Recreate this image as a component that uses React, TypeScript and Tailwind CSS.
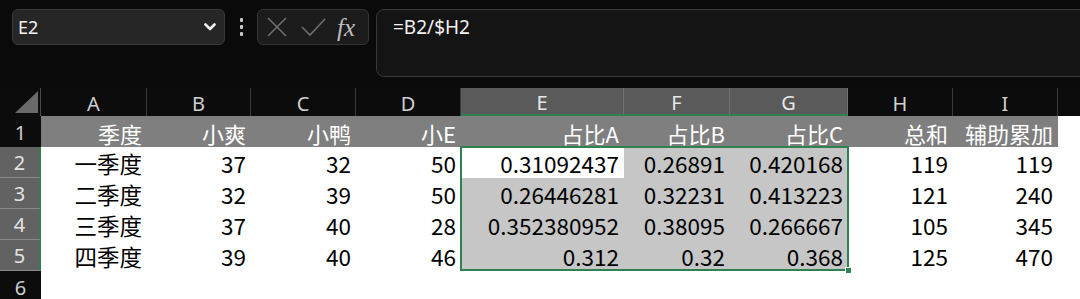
import React from "react";

const FONT = { fontFamily: '"Noto Sans CJK SC", "Noto Sans", sans-serif' };
const UI = { fontFamily: '"Noto Sans", sans-serif' };

const colLetters = ["A", "B", "C", "D", "E", "F", "G", "H", "I"];
const colW = [
  "w-[106px]",
  "w-[104px]",
  "w-[105px]",
  "w-[105px]",
  "w-[163px]",
  "w-[106px]",
  "w-[118px]",
  "w-[105px]",
  "w-[105px]",
];

const header = ["季度", "小爽", "小鸭", "小E", "占比A", "占比B", "占比C", "总和", "辅助累加"];

const rows = [
  ["一季度", "37", "32", "50", "0.31092437", "0.26891", "0.420168", "119", "119"],
  ["二季度", "32", "39", "50", "0.26446281", "0.32231", "0.413223", "121", "240"],
  ["三季度", "37", "40", "28", "0.352380952", "0.38095", "0.266667", "105", "345"],
  ["四季度", "39", "40", "46", "0.312", "0.32", "0.368", "125", "470"],
];

function Toolbar() {
  return (
    <div className="flex items-start h-[88px] pt-[9px] pl-[12px]">
      {/* Name box */}
      <div className="w-[213px] h-[36px] shrink-0 rounded-[6px] border border-[#3a3a3a] bg-[#262626] flex items-center justify-between pl-[5px] pr-[8px]">
        <span className="text-[18px] text-[#f2f2f2]" style={UI}>
          E2
        </span>
        <svg width="12" height="8" viewBox="0 0 12 8">
          <path d="M1.5 1.5 L6 6 L10.5 1.5" fill="none" stroke="#f0f0f0" strokeWidth="2.6" strokeLinecap="round" strokeLinejoin="round" />
        </svg>
      </div>

      {/* dots */}
      <div className="w-[32px] h-[36px] shrink-0 flex flex-col items-center justify-center gap-[3px]">
        <span className="w-[3px] h-[4px] rounded-[1px] bg-[#c8c8c8]" />
        <span className="w-[3px] h-[4px] rounded-[1px] bg-[#c8c8c8]" />
        <span className="w-[3px] h-[4px] rounded-[1px] bg-[#c8c8c8]" />
      </div>

      {/* cancel / enter / fx */}
      <div className="w-[112px] h-[36px] shrink-0 rounded-[6px] border border-[#353535] bg-[#1c1c1c] flex items-center pl-[9px]">
        <svg width="20" height="20" viewBox="0 0 20 20" className="shrink-0">
          <path d="M1 1 L19 19 M19 1 L1 19" stroke="#6e6e6e" strokeWidth="1.6" />
        </svg>
        <svg width="25" height="20" viewBox="0 0 25 20" className="ml-[14px] shrink-0">
          <path d="M1 10 L9 18 L24 2" fill="none" stroke="#6e6e6e" strokeWidth="1.6" />
        </svg>
        <span
          className="ml-[11px] text-[25px] italic leading-none text-[#bdbdbd]"
          style={{ fontFamily: '"Liberation Serif", serif' }}
        >
          fx
        </span>
      </div>

      {/* formula bar */}
      <div className="ml-[7px] flex-1 -mr-[20px] h-[68px] rounded-[8px] border border-[#3a3a3a] bg-[#141414] pl-[16px]">
        <div className="h-[34px] flex items-center text-[19px] text-[#f2f2f2]" style={UI}>
          =B2/$H2
        </div>
      </div>
    </div>
  );
}

function Sheet() {
  return (
    <div className="relative" style={FONT}>
      {/* column headers */}
      <div className="flex h-[28px] bg-[#0c0c0c]">
        <div className="w-[41px] shrink-0 border-r border-[#4a4a4a] flex items-end justify-end pr-[2px] pb-[3px]">
          <svg width="23" height="22" viewBox="0 0 23 22">
            <path d="M0 22 L23 22 L23 0 Z" fill="#6a6a6a" />
          </svg>
        </div>
        {colLetters.map((c, i) => {
          const sel = i >= 4 && i <= 6;
          return (
            <div
              key={c}
              className={`${colW[i]} shrink-0 flex items-center justify-center pt-[4px] text-[20px] border-r ${
                sel
                  ? "bg-[#5a5a5a] text-[#e8e8e8] border-[#707070] border-b-2 border-b-[#2f8152]"
                  : "text-[#d0d0d0] border-[#3a3a3a]"
              }`}
              style={UI}
            >
              {c}
            </div>
          );
        })}
        <div className="flex-1" />
      </div>

      {/* row 1 */}
      <div className="flex h-[31px] bg-white">
        <div
          className="w-[41px] shrink-0 bg-[#0c0c0c] flex items-center justify-center pt-[3px] text-[20px] text-[#cfcfcf]"
          style={UI}
        >
          1
        </div>
        {header.map((h, i) => (
          <div
            key={h}
            className={`${colW[i]} shrink-0 bg-[#7f7f7f] text-white text-[22px] flex items-center justify-end pr-[5px] pt-[3px]`}
          >
            {h}
          </div>
        ))}
        <div className="flex-1" />
      </div>

      {/* data rows */}
      {rows.map((r, ri) => (
        <div key={ri} className="flex h-[31px] bg-white">
          <div
            className="w-[41px] shrink-0 bg-[#626262] border-b border-[#8a8a8a] border-r-2 border-r-[#2f8152] flex items-center justify-center pt-[2px] text-[20px] text-[#e4e4e4]"
            style={UI}
          >
            {ri + 2}
          </div>
          {r.map((v, ci) => {
            const inSel = ci >= 4 && ci <= 6;
            const active = ri === 0 && ci === 4;
            return (
              <div
                key={ci}
                className={`${colW[ci]} shrink-0 text-black text-[22.5px] flex items-center justify-end pr-[5px] pt-[2px] ${
                  inSel && !active ? "bg-[#c6c6c6]" : "bg-white"
                }`}
              >
                {v}
              </div>
            );
          })}
          <div className="flex-1" />
        </div>
      ))}

      {/* row 6 */}
      <div className="flex h-[31px] bg-white">
        <div
          className="w-[41px] shrink-0 bg-[#0c0c0c] flex items-center justify-center pt-[2px] text-[20px] text-[#cfcfcf]"
          style={UI}
        >
          6
        </div>
        <div className="flex-1" />
      </div>

      {/* selection outline + fill handle */}
      <div className="absolute left-[460px] top-[58px] w-[389px] h-[125px] border-2 border-[#2f8152] pointer-events-none" />
      <div className="absolute left-[845px] top-[179px] w-[7px] h-[7px] bg-[#2f8152] border border-white" />
    </div>
  );
}

export default function App() {
  return (
    <div className="w-[1080px] h-[299px] overflow-hidden bg-[#0a0a0a]">
      <Toolbar />
      <Sheet />
    </div>
  );
}
